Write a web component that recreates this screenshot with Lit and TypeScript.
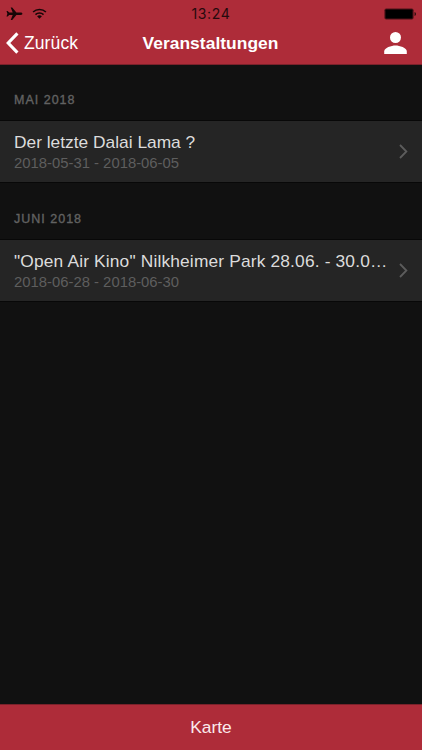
import { LitElement, html, css } from "lit";
import { customElement, property } from "lit/decorators.js";

const events = [
  { month: "MAI 2018", title: "Der letzte Dalai Lama ?", dates: "2018-05-31 - 2018-06-05", wide: false },
  { month: "JUNI 2018", title: "\"Open Air Kino\" Nilkheimer Park 28.06. - 30.0…", dates: "2018-06-28 - 2018-06-30", wide: true },
];

@customElement("event-row")
class EventRow extends LitElement {
  @property() heading = "";
  @property() dates = "";
  @property({ type: Boolean, reflect: true }) wide = false;

  static styles = css`
    :host {
      display: flex;
      align-items: center;
      box-sizing: border-box;
      height: 63px;
      padding: 0 14px;
      background: #252525;
      border-top: 1px solid #080808;
      border-bottom: 1px solid #080808;
    }
    .text { flex: 1; min-width: 0; }
    .title {
      font-size: 17.35px;
      line-height: 23px;
      color: #dcdcdc;
      white-space: nowrap;
    }
    :host([wide]) .title { letter-spacing: 0.16px; }
    .dates { font-size: 14.85px; line-height: 18px; color: #5e5e5e; }
    .chevron { flex: none; width: 9px; height: 15px; margin-left: 8px; }
  `;

  render() {
    return html`
      <div class="text">
        <div class="title">${this.heading}</div>
        <div class="dates">${this.dates}</div>
      </div>
      <svg class="chevron" viewBox="0 0 9 15">
        <path d="M1 1 7.4 7.5 1 14" fill="none" stroke="#5c5c5c" stroke-width="1.8" />
      </svg>
    `;
  }
}

@customElement("app-root")
class AppRoot extends LitElement {
  static styles = css`
    :host {
      display: flex;
      flex-direction: column;
      height: 100vh;
      overflow: hidden;
      background: #111111;
      color: #fff;
      font-family: "Liberation Sans", Arial, sans-serif;
    }
    .header { flex: none; height: 65px; box-sizing: border-box; background: #ae2c39; border-bottom: 1px solid #7b222b; }
    .status, .nav { display: grid; grid-template-columns: 1fr auto 1fr; align-items: center; }
    .status { height: 27px; padding: 0 5px 0 6px; }
    .signals { display: flex; align-items: center; gap: 9px; }
    .plane { width: 17px; height: 16px; }
    .wifi { width: 15px; height: 11px; margin-bottom: 1px; }
    .time { font-family: Inter, sans-serif; font-size: 14px; letter-spacing: 0.7px; margin-right: 1px; color: #250a0d; }
    .battery { justify-self: end; width: 33px; height: 12px; }
    .nav { height: 32px; padding: 0 15px 0 6px; }
    .back { display: flex; align-items: center; gap: 5px; font-size: 17.5px; }
    .back span { letter-spacing: 0.1px; }
    .arrow { width: 13px; height: 22px; }
    .heading { font-size: 17.4px; font-weight: 700; letter-spacing: 0.05px; margin-left: 8px; }
    .person { justify-self: end; width: 23px; height: 22px; }
    .list { flex: 1; min-height: 0; }
    .month {
      box-sizing: border-box;
      height: 56px;
      padding: 27px 14px 0;
      font-size: 12.5px;
      line-height: 18px;
      letter-spacing: 1px;
      color: #626262;
      -webkit-text-stroke: 0.35px #626262;
    }
    .month:first-child { height: 55px; padding-top: 26px; }
    .toolbar {
      flex: none;
      display: flex;
      align-items: center;
      justify-content: center;
      height: 45px;
      background: #ae2c39;
      border-top: 1px solid #7b222b;
      box-sizing: border-box;
      height: 46px;
      font-size: 17.4px;
      color: #fbeaec;
    }
  `;

  render() {
    return html`
      <div class="header">
        <div class="status">
          <div class="signals">
            <svg class="plane" viewBox="0 0 17 16">
              <path fill="#160607" d="M16.4 7.7c0-.8-.8-1.2-2-1.2h-4L6.2 1.4H4.7l2 5.1H3.2L1.6 4.9H.5l.9 2.8-.9 2.8h1.1l1.6-1.6h3.5l-2 5.1h1.5l4.2-5.1h4c1.2 0 2-.4 2-1.2z" />
            </svg>
            <svg class="wifi" viewBox="0 0 16 12">
              <g fill="none" stroke="#160607" stroke-width="1.7">
                <path d="M1 4.4a10 10 0 0 1 14 0" />
                <path d="M3.6 7.2a6.3 6.3 0 0 1 8.8 0" />
              </g>
              <path fill="#160607" d="M5.4 9.1a3.8 3.8 0 0 1 5.2 0L8 11.7z" />
            </svg>
          </div>
          <div class="time">13:24</div>
          <svg class="battery" viewBox="0 0 33 12">
            <rect x=".4" y=".4" width="29.2" height="11.2" rx="1.8" fill="#4c1319" />
            <rect x="1.5" y="1.4" width="27" height="9.2" rx=".8" fill="#000" />
            <path d="M30.6 4a2.2 2.2 0 0 1 0 4z" fill="#160607" />
          </svg>
        </div>
        <div class="nav">
          <div class="back">
            <svg class="arrow" viewBox="0 0 13 22">
              <path d="M11.4 1.4 2.2 11l9.2 9.6" fill="none" stroke="#fff" stroke-width="3.1" />
            </svg>
            <span>Zurück</span>
          </div>
          <div class="heading">Veranstaltungen</div>
          <svg class="person" viewBox="0 0 23 22">
            <circle cx="11.5" cy="5.5" r="5.5" fill="#fff" />
            <path d="M.2 22v-2.6c0-3.7 7.2-5.9 11.3-5.9s11.3 2.2 11.3 5.9V22z" fill="#fff" />
          </svg>
        </div>
      </div>
      <div class="list">
        ${events.map((e) => html`
          <div class="month">${e.month}</div>
          <event-row .heading=${e.title} .dates=${e.dates} ?wide=${e.wide}></event-row>
        `)}
      </div>
      <div class="toolbar">Karte</div>
    `;
  }
}
